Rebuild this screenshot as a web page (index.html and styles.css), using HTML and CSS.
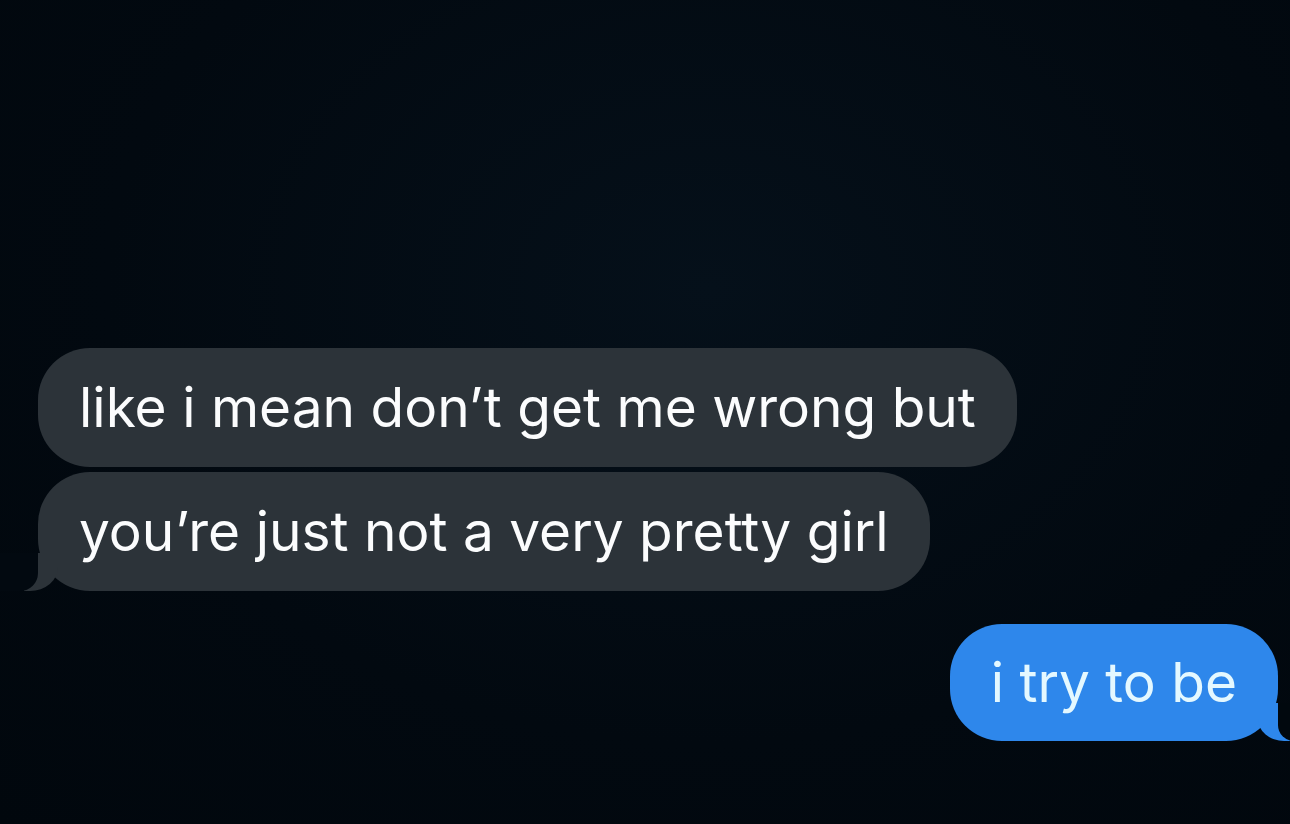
FILE: index.html
```
<!DOCTYPE html>
<html lang="en">

<head>
  <meta charset="UTF-8">
  <meta name="viewport" content="width=device-width, initial-scale=1.0">
  <title>Messages</title>
  <link rel="stylesheet" href="styles.css">
</head>

<body>
  <!-- conversation -->
  <div class="thread">
    <div class="bubble incoming">like i mean don’t get me wrong but</div>
    <div class="bubble incoming last">you’re just not a very pretty girl</div>
    <div class="bubble outgoing last">i try to be</div>
  </div>
</body>

</html>
```

FILE: styles.css
```
/* page */
body {
  margin: 0;
  min-height: 100vh;
  background: radial-gradient(ellipse at 55% 35%, #05101a 0%, #020910 60%, #01070d 100%);
  font-family: "Inter", "Liberation Sans", Arial, sans-serif;
  overflow: hidden;
}

/* message list */
.thread {
  display: flex;
  flex-direction: column;
  padding: 348px 12px 0 38px;
}

/* bubbles */
.bubble {
  position: relative;
  max-width: 1000px;
  padding: 28px 41px 29px;
  font-size: 55px;
  line-height: 62px;
  border-radius: 52px;
}

.incoming {
  align-self: flex-start;
  background-color: #2c3339;
  color: #fbfcfd;
  margin-bottom: 5px;
}

.outgoing {
  align-self: flex-end;
  background-color: #2e87eb;
  color: #e4f8ff;
  margin-top: 28px;
  padding-top: 27px;
  padding-bottom: 28px;
}

/* tails */
.bubble.last::before,
.bubble.last::after {
  content: "";
  position: absolute;
  bottom: 0;
  height: 38px;
}

.incoming.last::before {
  left: -14px;
  width: 34px;
  background-color: #2c3339;
  border-bottom-right-radius: 28px 24px;
}

.incoming.last::after {
  left: -40px;
  width: 40px;
  background-color: #020910;
  border-bottom-right-radius: 18px;
}

.outgoing.last::before {
  right: -12px;
  width: 32px;
  background-color: #2e87eb;
  border-bottom-left-radius: 26px 22px;
}

.outgoing.last::after {
  right: -40px;
  width: 40px;
  background-color: #01080e;
  border-bottom-left-radius: 16px;
}
```
